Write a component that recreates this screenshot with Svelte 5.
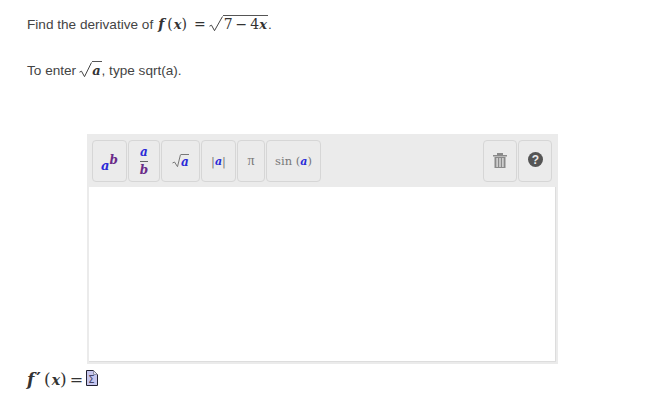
<script>
  const tools = [
    { id: 'pow', w: 35 },
    { id: 'frac', w: 32 },
    { id: 'sqrt', w: 39 },
    { id: 'abs', w: 35 },
    { id: 'pi', w: 28 },
    { id: 'sin', w: 55 }
  ];
</script>

{#snippet radical(w, h, color)}
  <svg class="radical" width={w} height={h} viewBox="0 0 {w} {h}">
    <path d="M.5 {h * 0.6}l2-1 3 {h * 0.38 - 1} L{w - 0.5} .5" fill="none" stroke={color} />
  </svg>
{/snippet}

<main class="page">
  <p class="line first">
    <span>Find the derivative of</span>
    <span class="math">
      <i class="fn">f</i>
      <span class="paren open">(</span><i class="var">x</i><span class="paren">)</span>
      <span class="eq">=</span>
      <span class="root">
        {@render radical(14, 17, '#444')}
        <span class="under"><span class="num">7</span><span class="minus">−</span><span class="num">4</span><i class="var">x</i></span>
      </span>
    </span><span>.</span>
  </p>
  <p class="line second">
    <span>To enter</span>
    <span class="math">
      <span class="root">
        {@render radical(13, 17, '#444')}
        <span class="under short"><i class="var">a</i></span>
      </span>
    </span><span>, type sqrt(a).</span>
  </p>

  <section class="editor">
    <div class="toolbar">
      <div class="group">
        {#each tools as tool}
          <button class="tool" style="width: {tool.w}px">
            {#if tool.id === 'pow'}
              <span class="pow"><i class="blue">a</i><i class="purple">b</i></span>
            {:else if tool.id === 'frac'}
              <span class="frac"><i class="blue">a</i><i class="purple">b</i></span>
            {:else if tool.id === 'sqrt'}
              <span class="small-root">
                {@render radical(9, 15, '#777')}
                <i class="blue">a</i>
              </span>
            {:else if tool.id === 'abs'}
              <span class="abs">|<i class="blue">a</i>|</span>
            {:else if tool.id === 'pi'}
              <span class="pi">π</span>
            {:else}
              <span class="sin">sin (<i class="blue">a</i>)</span>
            {/if}
          </button>
        {/each}
      </div>
      <div class="group">
        <button class="tool icon" aria-label="Clear">
          <svg class="trash" width="14" height="15" viewBox="0 0 14 15">
            <path fill="#8a8a8a" d="M0 2h14v1.5H0zM4 0h6v2H4zM1.5 4h11v11h-11z" />
            <path fill="#ebebeb" d="M3.5 5h1.2v9H3.5zM6.4 5h1.2v9H6.4zM9.3 5h1.2v9H9.3z" />
          </svg>
        </button>
        <button class="tool icon" aria-label="Help">
          <svg class="help" width="15" height="15" viewBox="0 0 15 15">
            <circle cx="7.5" cy="7.5" r="7.5" fill="#555" />
            <text x="7.5" y="11.8" text-anchor="middle" class="qmark">?</text>
          </svg>
        </button>
      </div>
    </div>
    <div class="input-area"></div>
  </section>

  <div class="answer">
    <span class="answer-math"><i class="fn">f</i><span class="prime">′</span><span class="paren open">(</span><i class="var">x</i><span class="paren">)</span><span class="eq">=</span></span>
    <svg class="doc" width="12" height="16" viewBox="0 0 12 16">
      <path d="M.5.5h7l4 4v11H.5z" fill="#c6c6ee" stroke="#223" />
      <path d="M7.5.5v4h4z" fill="#dde" stroke="#778" stroke-width=".7" />
      <text x="5.5" y="13" class="sigma">Σ</text>
    </svg>
  </div>
</main>

<style>
  :global(body) {
    background: #fff;
  }

  .page {
    width: 652px;
    height: 406px;
    overflow: hidden;
    font-family: "Liberation Sans", Arial, sans-serif;
    font-size: 13.6px;
    color: #444;
  }

  .line {
    display: flex;
    align-items: baseline;
    margin: 0 0 0 27px;
    height: 20px;
    line-height: 20px;
    white-space: nowrap;
  }

  .first {
    margin-top: 13px;
  }

  .second {
    margin-top: 26px;
  }

  .math {
    display: inline-flex;
    align-items: baseline;
    margin-left: 5px;
    color: #333;
  }

  .second .math {
    margin-left: 3px;
  }

  .fn {
    font-family: "DejaVu Serif", serif;
    font-weight: 700;
    font-size: 14px;
    margin-right: 3px;
  }

  .var {
    font-family: "DejaVu Serif", serif;
    font-weight: 700;
    font-size: 13px;
  }

  .paren {
    font-family: "DejaVu Serif", serif;
    font-size: 14px;
  }

  .paren.open {
    margin-right: 1px;
  }

  .eq {
    font-family: "DejaVu Sans", sans-serif;
    font-size: 14px;
    margin: 0 3px 0 7px;
  }

  .root {
    display: inline-flex;
    align-items: baseline;
  }

  .radical {
    align-self: flex-start;
    flex: none;
  }

  .root .radical {
    margin-top: 3px;
  }

  .under {
    box-shadow: 0 -1px 0 #555;
    margin-top: 3px;
    line-height: 17px;
    height: 17px;
    padding: 0 1px;
  }

  .under.short {
    padding: 0 1px 0 0;
  }

  .num {
    font-family: "DejaVu Serif", serif;
    font-size: 14px;
  }

  .minus {
    font-family: "DejaVu Sans", sans-serif;
    font-size: 14px;
    margin: 0 3px;
  }

  .editor {
    width: 471px;
    margin: 55px 0 0 87px;
    padding: 0 2px 2px;
    box-sizing: border-box;
    background: #ebebeb;
  }

  .toolbar {
    display: flex;
    justify-content: space-between;
    padding: 6px 4px 5px 3px;
  }

  .group {
    display: flex;
    gap: 1px;
  }

  .tool {
    height: 42px;
    padding: 0;
    box-sizing: border-box;
    border: 1px solid #d6d6d6;
    border-radius: 4px;
    background: #ebebeb;
    display: flex;
    align-items: center;
    justify-content: center;
    font-family: "DejaVu Serif", serif;
    color: #777;
  }

  .tool.icon {
    width: 34px;
  }

  .trash {
    margin-bottom: 1px;
  }

  .help {
    margin-bottom: 3px;
  }

  .blue {
    color: #2a2ad8;
    font-family: "DejaVu Serif", serif;
    font-weight: 700;
  }

  .purple {
    color: #6a2a88;
    font-family: "DejaVu Serif", serif;
    font-weight: 700;
  }

  .pow {
    display: flex;
    align-items: flex-end;
    margin-top: 3px;
    line-height: 13px;
  }

  .pow .blue {
    margin-top: 5px;
    font-size: 13px;
  }

  .pow .purple {
    font-size: 12px;
    align-self: flex-start;
  }

  .frac {
    display: flex;
    flex-direction: column;
    align-items: center;
    font-size: 12px;
    line-height: 16px;
  }

  .frac i:first-child {
    border-bottom: 1px solid #666;
    padding: 0 0 1px;
    width: 8px;
    text-align: center;
  }

  .small-root {
    display: inline-flex;
    align-items: flex-end;
    font-size: 12px;
  }

  .small-root i {
    box-shadow: 0 -1px 0 #777;
    line-height: 14px;
  }

  .abs, .sin {
    font-size: 11.5px;
  }

  .abs i, .sin i {
    font-size: 11px;
  }

  .pi {
    font-family: "Liberation Serif", serif;
    font-size: 14px;
  }

  .qmark {
    fill: #ebebeb;
    font-family: "Liberation Sans", sans-serif;
    font-weight: 700;
    font-size: 12px;
  }

  .input-area {
    height: 175px;
    box-sizing: border-box;
    background: #fff;
    border-right: 1px solid #ddd;
    border-bottom: 1px solid #ddd;
  }

  .answer {
    display: flex;
    align-items: center;
    gap: 3px;
    margin: 2px 0 0 27px;
    height: 24px;
  }

  .answer-math {
    display: inline-flex;
    align-items: baseline;
    color: #333;
  }

  .answer-math .fn {
    font-size: 17px;
    margin-right: 0;
  }

  .answer-math .var {
    font-size: 14px;
  }

  .answer-math .paren {
    font-size: 17px;
  }

  .answer-math .eq {
    font-size: 16px;
    margin: 0 0 0 3px;
  }

  .prime {
    font-family: "DejaVu Sans", sans-serif;
    font-size: 18px;
    font-weight: 700;
    margin: 0 3px 0 2px;
  }

  .sigma {
    font-family: "DejaVu Sans", sans-serif;
    font-size: 10px;
    fill: #446;
    text-anchor: middle;
  }
</style>
